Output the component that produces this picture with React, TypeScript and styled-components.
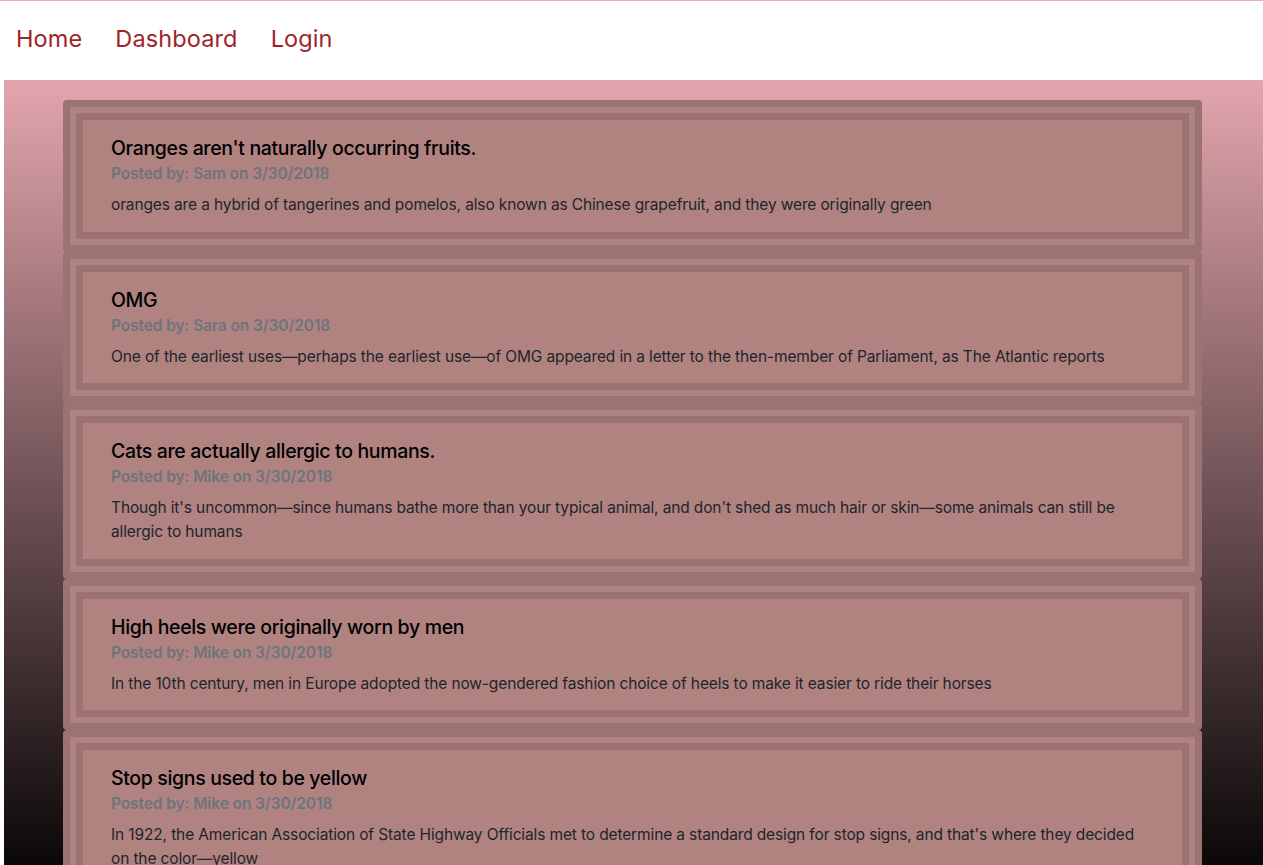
import React from "react";
import styled, { createGlobalStyle } from "styled-components";

const GlobalStyle = createGlobalStyle`
  html, body { margin: 0; padding: 0; background: #ffffff; }
  body {
    font-family: Inter, "Noto Sans", "Liberation Sans", sans-serif;
    -webkit-font-smoothing: antialiased;
  }
  * { box-sizing: border-box; }
`;

const Page = styled.div`
  border-top: 1px solid #e7b0b7;
`;

const Nav = styled.nav`
  height: 79px;
  display: flex;
  align-items: center;
  gap: 33px;
  padding: 0 0 4px 16px;
  background: #ffffff;
`;

const NavLink = styled.a`
  font-size: 23.5px;
  line-height: 28px;
  color: #a0232a;
  text-decoration: none;
  letter-spacing: 0.12px;
`;

const Main = styled.main`
  margin-left: 4px;
  min-height: calc(100vh - 80px);
  padding: 20px 61px 0 59px;
  background: linear-gradient(to bottom, #e3a5ad 0%, #7a5a5e 45%, #000000 100%);
`;

const Card = styled.article`
  border: 7px solid #9b7370;
  border-radius: 4px;
  background: #b08381;
  padding: 6px;
`;

const CardBody = styled.div`
  border: 7px solid #9b7370;
  background: #b08381;
  padding: 16px 28px 14.5px;
`;

const Title = styled.h5`
  margin: 0;
  font-size: 19.5px;
  line-height: 24px;
  font-weight: 500;
  letter-spacing: -0.35px;
  color: #000000;
`;

const Meta = styled.h6`
  margin: 2px 0 7px;
  font-size: 15.5px;
  line-height: 24px;
  font-weight: 600;
  letter-spacing: -0.1px;
  color: #6c757d;
`;

const Text = styled.p`
  margin: 0;
  font-size: 15.5px;
  line-height: 24px;
  letter-spacing: -0.13px;
  color: #212529;
`;

type Post = { title: string; author: string; date: string; body: string };

const posts: Post[] = [
  {
    title: "Oranges aren't naturally occurring fruits.",
    author: "Sam",
    date: "3/30/2018",
    body: "oranges are a hybrid of tangerines and pomelos, also known as Chinese grapefruit, and they were originally green",
  },
  {
    title: "OMG",
    author: "Sara",
    date: "3/30/2018",
    body: "One of the earliest uses\u2014perhaps the earliest use\u2014of OMG appeared in a letter to the then-member of Parliament, as The Atlantic reports",
  },
  {
    title: "Cats are actually allergic to humans.",
    author: "Mike",
    date: "3/30/2018",
    body: "Though it's uncommon\u2014since humans bathe more than your typical animal, and don't shed as much hair or skin\u2014some animals can still be allergic to humans",
  },
  {
    title: "High heels were originally worn by men",
    author: "Mike",
    date: "3/30/2018",
    body: "In the 10th century, men in Europe adopted the now-gendered fashion choice of heels to make it easier to ride their horses",
  },
  {
    title: "Stop signs used to be yellow",
    author: "Mike",
    date: "3/30/2018",
    body: "In 1922, the American Association of State Highway Officials met to determine a standard design for stop signs, and that's where they decided on the color\u2014yellow",
  },
];

export default function App() {
  return (
    <>
      <GlobalStyle />
      <Page>
        <Nav>
          <NavLink href="#">Home</NavLink>
          <NavLink href="#">Dashboard</NavLink>
          <NavLink href="#">Login</NavLink>
        </Nav>
        <Main>
          {posts.map((p) => (
            <Card key={p.title}>
              <CardBody>
                <Title>{p.title}</Title>
                <Meta>
                  Posted by: {p.author} on {p.date}
                </Meta>
                <Text>{p.body}</Text>
              </CardBody>
            </Card>
          ))}
        </Main>
      </Page>
    </>
  );
}
